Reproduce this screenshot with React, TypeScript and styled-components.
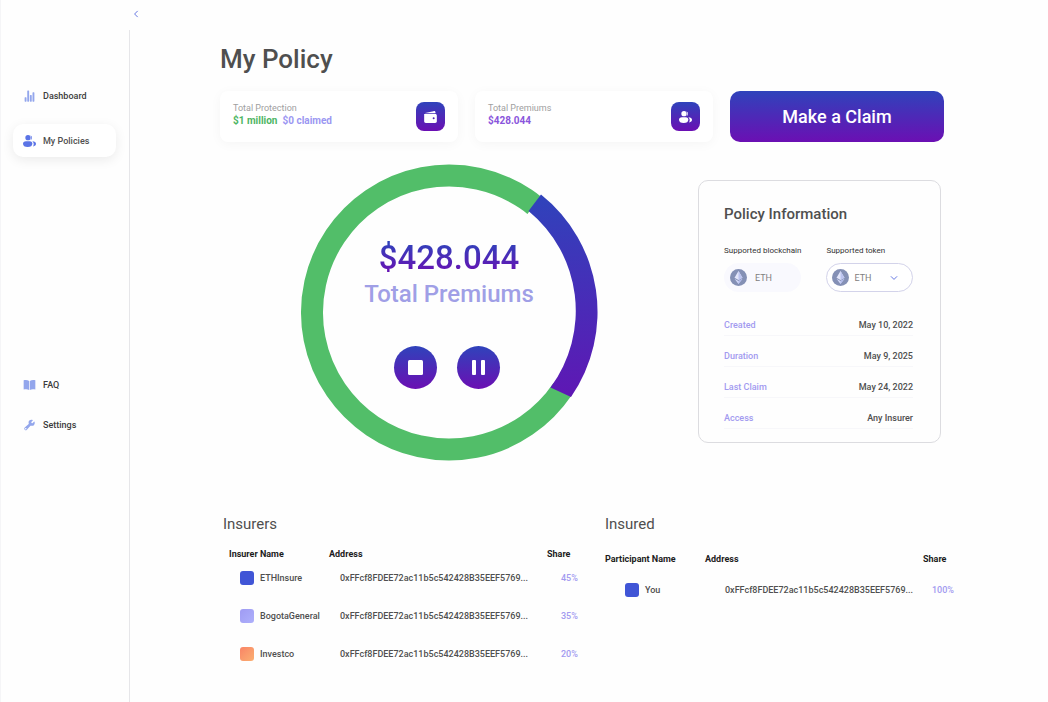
import React from "react";
import styled, { createGlobalStyle } from "styled-components";
import { IoBuild, IoChevronBack, IoChevronDown, IoStatsChart } from "react-icons/io5";

const GlobalStyle = createGlobalStyle`
  *, *::before, *::after { box-sizing: border-box; }
  body {
    margin: 0;
    background: #fefefe;
    color: #4f4f4f;
    font-family: Roboto, "Liberation Sans", sans-serif;
    font-weight: 500;
  }
  button, select { font: inherit; color: inherit; }
  h1, h2, p, dl, dd { margin: 0; }
`;

const gradient = "linear-gradient(180deg, #2f43bb 0%, #6b0fb3 100%)";

const Shell = styled.div`
  display: grid;
  grid-template-columns: 130px minmax(0, 1fr);
  grid-template-rows: 30px minmax(0, 1fr);
  min-height: 100vh;
  border-left: 1px solid #f5f5f7;
`;

const TopStrip = styled.div`
  grid-column: 2;
  display: flex;
`;

const CollapseButton = styled.button`
  display: grid;
  place-items: center;
  width: 10px;
  height: 28px;
  padding: 0;
  border: 0;
  background: none;
  color: #5c6fe0;
  font-size: 10px;
  cursor: pointer;
`;

const Sidebar = styled.nav`
  grid-row: 2;
  grid-column: 1;
  display: flex;
  flex-direction: column;
  gap: 211px;
  margin-right: 1px;
  padding: 49px 13px 0 12px;
  border-right: 1px solid #e6e6e9;
`;

const NavGroup = styled.div<{ $gap: number }>`
  display: flex;
  flex-direction: column;
  gap: ${(p) => p.$gap}px;
`;

const NavLink = styled.a<{ $active?: boolean }>`
  display: flex;
  align-items: center;
  gap: 7px;
  height: 33px;
  padding: 0 10px;
  border-radius: 10px;
  font-size: 9px;
  text-decoration: none;
  color: ${(p) => (p.$active ? "#4f4f4f" : "#3c3c3c")};
  background: ${(p) => (p.$active ? "#ffffff" : "transparent")};
  box-shadow: ${(p) => (p.$active ? "0 3px 12px rgba(0, 0, 0, 0.08)" : "none")};

  svg {
    width: 13px;
    height: 12px;
    color: ${(p) => (p.$active ? "#5b74e6" : "#93a6ec")};
  }
`;

const Main = styled.main`
  grid-row: 2;
  grid-column: 2;
  padding: 12px 94px 32px 89px;
`;

const PageTitle = styled.h1`
  font-size: 26px;
  line-height: 34px;
  font-weight: 500;
`;

const SummaryRow = styled.div`
  display: grid;
  grid-template-columns: 238fr 238fr 214fr;
  gap: 17px;
  margin-top: 15px;
  padding-right: 10px;
`;

const StatCard = styled.section`
  display: flex;
  align-items: center;
  justify-content: space-between;
  height: 51px;
  padding: 0 13px;
  border-radius: 8px;
  background: #ffffff;
  box-shadow: 0 2px 12px rgba(0, 0, 0, 0.04);
`;

const StatText = styled.div`
  padding-bottom: 4px;
`;

const StatLabel = styled.p`
  font-size: 9px;
  line-height: 12px;
  font-weight: 400;
  color: #a0a0a0;
`;

const StatValues = styled.p`
  display: flex;
  gap: 5px;
  font-size: 10px;
  line-height: 14px;
  font-weight: 700;
`;

const StatValue = styled.span<{ $color: string }>`
  color: ${(p) => p.$color};
`;

const StatBadge = styled.span`
  display: grid;
  place-items: center;
  width: 29px;
  height: 29px;
  border-radius: 8px;
  background: ${gradient};
  color: #ffffff;
`;

const ClaimButton = styled.button`
  height: 51px;
  border: 0;
  border-radius: 10px;
  background: ${gradient};
  color: #ffffff;
  font-size: 18px;
  cursor: pointer;
`;

const Overview = styled.div`
  display: grid;
  grid-template-columns: 458fr 243fr;
  gap: 20px;
  align-items: start;
  margin-top: 23px;
  padding-right: 13px;
`;

const Donut = styled.figure`
  display: grid;
  justify-items: center;
  margin: 0;

  > * {
    grid-area: 1 / 1;
  }
`;

const DonutRing = styled.svg`
  overflow: visible;
`;

const DonutBody = styled.figcaption`
  padding-top: 73px;
  text-align: center;
`;

const DonutAmount = styled.p`
  font-size: 33px;
  line-height: 40px;
  background: linear-gradient(180deg, #2f43bb 10%, #6b0fb3 90%);
  background-clip: text;
  color: transparent;
`;

const DonutLabel = styled.p`
  font-size: 24px;
  line-height: 32px;
  color: #a09fe6;
`;

const DonutControls = styled.div`
  display: flex;
  justify-content: center;
  gap: 20px;
  margin-top: 36px;
  padding-right: 4px;
`;

const RoundButton = styled.button`
  display: grid;
  place-items: center;
  width: 43px;
  height: 43px;
  padding: 0;
  border: 0;
  border-radius: 50%;
  background: ${gradient};
  cursor: pointer;
`;

const Panel = styled.section`
  margin-top: 15px;
  padding: 23px 27px 13px 25px;
  border: 1px solid #dcdce0;
  border-radius: 10px;
`;

const PanelTitle = styled.h2`
  font-size: 15px;
  line-height: 20px;
  font-weight: 500;
`;

const AssetRow = styled.div`
  display: grid;
  grid-template-columns: 77fr 87fr;
  gap: 25px;
  margin-top: 22px;
`;

const AssetLabel = styled.label`
  display: block;
  font-size: 8px;
  line-height: 10px;
  font-weight: 400;
  color: #333333;
  white-space: nowrap;
`;

const AssetPill = styled.div<{ $outlined?: boolean }>`
  display: flex;
  align-items: center;
  height: 29px;
  margin-top: 7px;
  padding: 0 5px;
  border: 1px solid ${(p) => (p.$outlined ? "#d3d3ea" : "transparent")};
  border-radius: 15px;
  background: ${(p) => (p.$outlined ? "#ffffff" : "#f9f9fe")};
  color: #808080;
  font-size: 9px;
  font-weight: 400;
`;

const AssetName = styled.output`
  margin-left: 8px;
`;

const AssetSelect = styled.select`
  flex: 1;
  min-width: 0;
  margin-left: 5px;
  padding: 0;
  border: 0;
  background: none;
  appearance: none;
  cursor: pointer;
`;

const SelectArrow = styled(IoChevronDown)`
  margin-right: 8px;
  color: #5c6fe0;
  font-size: 10px;
  pointer-events: none;
`;

const Facts = styled.dl`
  margin-top: 13px;
`;

const Fact = styled.div`
  display: flex;
  justify-content: space-between;
  height: 31px;
  padding-top: 13px;
  border-bottom: 1px solid #f7f7fa;
  font-size: 9px;
  line-height: 14px;
`;

const FactName = styled.dt`
  color: #a29af0;
`;

const Parties = styled.div`
  display: grid;
  grid-template-columns: 385fr 349fr;
  margin-top: 53px;
`;

const Party = styled.section<{ $left: number }>`
  padding-left: ${(p) => p.$left}px;
`;

const PartyTitle = styled.h2`
  font-size: 15px;
  line-height: 20px;
  font-weight: 400;
`;

const PartyTable = styled.table<{ $left: number; $top: number }>`
  width: calc(100% - ${(p) => p.$left}px);
  margin: ${(p) => p.$top}px 0 0 ${(p) => p.$left}px;
  border-collapse: collapse;
  table-layout: fixed;
  font-size: 9px;
  line-height: 10px;
  white-space: nowrap;
`;

const HeadCell = styled.th<{ $width?: number }>`
  width: ${(p) => (p.$width ? `${p.$width}px` : "auto")};
  padding: 0;
  text-align: left;
  font-weight: 700;
  color: #1c1c1c;
`;

const Cell = styled.td<{ $left: number; $height: number }>`
  height: ${(p) => p.$height}px;
  padding: 0 0 0 ${(p) => p.$left}px;
  color: #4f4f4f;
`;

const ShareCell = styled(Cell)`
  color: #a29af0;
`;

const Holder = styled.span`
  display: flex;
  align-items: center;
  gap: 6px;
`;

const Swatch = styled.span<{ $fill: string }>`
  width: 14px;
  height: 14px;
  border-radius: 3px;
  background: ${(p) => p.$fill};
`;

function PeopleIcon() {
  return (
    <svg width="13" height="12" viewBox="0 0 39 36" fill="currentColor" aria-hidden="true">
      <circle cx="15" cy="8" r="8" />
      <path d="M9 19h11c6 0 8 3 8 7 0 6-5 10-14 10S0 32 0 26c0-4 3-7 9-7z" />
      <path d="M22 0.5a8 8 0 0 1 0 15 12 12 0 0 0 0-15z" />
      <path d="M28 18.5c7 0 11 3 11 8 0 4-3 7-9 8 2-3 2.5-6 2-9-.5-3-2-5.500-4-7z" />
    </svg>
  );
}

function WalletIcon() {
  return (
    <svg width="13" height="12" viewBox="0 0 38 36" fill="currentColor" aria-hidden="true">
      <path d="M3 6 28 0.5c4-.8 6 1 6 5V7H3z" />
      <path
        fillRule="evenodd"
        d="M0 9h33c3.5 0 5 2 5 5v17c0 3-2 5-5 5H5c-3 0-5-2-5-5zM28.5 18.500a3 3 0 1 0 0 6 3 3 0 0 0 0-6z"
      />
    </svg>
  );
}

function BookIcon() {
  return (
    <svg viewBox="0 0 39 36" fill="currentColor" aria-hidden="true">
      <path d="M2 4c6-2 12-1 16.500 2v27C14 30 8 30 2 31.500z" />
      <path d="M37 4c-6-2-12-1-16.500 2v27C25 30 31 30 37 31.500z" />
    </svg>
  );
}

function EthIcon() {
  return (
    <svg width="17" height="17" viewBox="0 0 34 34" aria-hidden="true">
      <circle cx="17" cy="17" r="17" fill="#8490b5" />
      <path d="M17 4 9 17.500l8 4.500 8-4.500z" fill="#e3e6fb" />
      <path d="M17 4v18l8-4.500z" fill="#bcc4f0" />
      <path d="M9 19.500 17 30l8-10.500-8 4.500z" fill="#d3d8f8" />
      <path d="M17 24v6l8-10.500z" fill="#b0b9ea" />
    </svg>
  );
}

function DonutChart() {
  return (
    <DonutRing width="296" height="296" viewBox="0 0 296 296" aria-hidden="true">
      <defs>
        <linearGradient id="share" x1="0" y1="0" x2="0" y2="1">
          <stop offset="0" stopColor="#2f43bb" />
          <stop offset="1" stopColor="#5f17b4" />
        </linearGradient>
      </defs>
      <circle
        cx="148"
        cy="147.5"
        r="137"
        fill="none"
        stroke="#52be69"
        strokeWidth="22"
        pathLength="360"
        strokeDasharray="274.5 85.5"
        transform="rotate(34 148 147.5)"
      />
      <path
        d="M240 29.500A150 150 0 0 1 270 232L249.500 222.500A129 129 0 0 0 227.500 46z"
        fill="url(#share)"
      />
    </DonutRing>
  );
}

type Row = { name: string; fill: string; share: string };

const ADDRESS = "0xFFcf8FDEE72ac11b5c542428B35EEF5769...";

const insurers: Row[] = [
  { name: "ETHInsure", fill: "#4055d6", share: "45%" },
  { name: "BogotaGeneral", fill: "linear-gradient(135deg, #9f9bf3, #aeb0fb)", share: "35%" },
  { name: "Investco", fill: "linear-gradient(135deg, #f98466, #fbb072)", share: "20%" },
];

const insured: Row[] = [{ name: "You", fill: "#4055d6", share: "100%" }];

const facts = [
  ["Created", "May 10, 2022"],
  ["Duration", "May 9, 2025"],
  ["Last Claim", "May 24, 2022"],
  ["Access", "Any Insurer"],
];

type HoldersProps = {
  nameHeading: string;
  rows: Row[];
  left: number;
  top: number;
  rowHeight: number;
  indent: [number, number, number];
};

function Holders({ nameHeading, rows, left, top, rowHeight, indent }: HoldersProps) {
  return (
    <PartyTable $left={left} $top={top}>
      <thead>
        <tr>
          <HeadCell $width={100}>{nameHeading}</HeadCell>
          <HeadCell $width={218}>Address</HeadCell>
          <HeadCell>Share</HeadCell>
        </tr>
      </thead>
      <tbody>
        {rows.map((row) => (
          <tr key={row.name}>
            <Cell $left={indent[0]} $height={rowHeight}>
              <Holder>
                <Swatch $fill={row.fill} />
                {row.name}
              </Holder>
            </Cell>
            <Cell $left={indent[1]} $height={rowHeight}>{ADDRESS}</Cell>
            <ShareCell $left={indent[2]} $height={rowHeight}>{row.share}</ShareCell>
          </tr>
        ))}
      </tbody>
    </PartyTable>
  );
}

export default function App() {
  return (
    <>
      <GlobalStyle />
      <Shell>
        <TopStrip>
          <CollapseButton type="button" aria-label="Collapse sidebar">
            <IoChevronBack />
          </CollapseButton>
        </TopStrip>

        <Sidebar aria-label="Main">
          <NavGroup $gap={12}>
            <NavLink href="#dashboard"><IoStatsChart />Dashboard</NavLink>
            <NavLink href="#policies" $active aria-current="page"><PeopleIcon />My Policies</NavLink>
          </NavGroup>
          <NavGroup $gap={7}>
            <NavLink href="#faq"><BookIcon />FAQ</NavLink>
            <NavLink href="#settings"><IoBuild />Settings</NavLink>
          </NavGroup>
        </Sidebar>

        <Main>
          <PageTitle>My Policy</PageTitle>

          <SummaryRow>
            <StatCard>
              <StatText>
                <StatLabel>Total Protection</StatLabel>
                <StatValues>
                  <StatValue $color="#4db563">$1 million</StatValue>
                  <StatValue $color="#9b97f2">$0 claimed</StatValue>
                </StatValues>
              </StatText>
              <StatBadge><WalletIcon /></StatBadge>
            </StatCard>
            <StatCard>
              <StatText>
                <StatLabel>Total Premiums</StatLabel>
                <StatValues>
                  <StatValue $color="#8a56dc">$428.044</StatValue>
                </StatValues>
              </StatText>
              <StatBadge><PeopleIcon /></StatBadge>
            </StatCard>
            <ClaimButton type="button">Make a Claim</ClaimButton>
          </SummaryRow>

          <Overview>
            <Donut>
              <DonutChart />
              <DonutBody>
                <DonutAmount>$428.044</DonutAmount>
                <DonutLabel>Total Premiums</DonutLabel>
                <DonutControls>
                  <RoundButton type="button" aria-label="Stop">
                    <svg width="15" height="15" viewBox="0 0 15 15">
                      <rect width="15" height="15" rx="1.5" fill="#fff" />
                    </svg>
                  </RoundButton>
                  <RoundButton type="button" aria-label="Pause">
                    <svg width="13" height="15" viewBox="0 0 13 15">
                      <rect width="4" height="15" rx="1" fill="#fff" />
                      <rect x="9" width="4" height="15" rx="1" fill="#fff" />
                    </svg>
                  </RoundButton>
                </DonutControls>
              </DonutBody>
            </Donut>

            <Panel>
              <PanelTitle>Policy Information</PanelTitle>
              <AssetRow>
                <div>
                  <AssetLabel htmlFor="blockchain">Supported blockchain</AssetLabel>
                  <AssetPill>
                    <EthIcon />
                    <AssetName id="blockchain">ETH</AssetName>
                  </AssetPill>
                </div>
                <div>
                  <AssetLabel htmlFor="token">Supported token</AssetLabel>
                  <AssetPill $outlined>
                    <EthIcon />
                    <AssetSelect id="token" defaultValue="ETH">
                      <option>ETH</option>
                    </AssetSelect>
                    <SelectArrow />
                  </AssetPill>
                </div>
              </AssetRow>
              <Facts>
                {facts.map(([name, value]) => (
                  <Fact key={name}>
                    <FactName>{name}</FactName>
                    <dd>{value}</dd>
                  </Fact>
                ))}
              </Facts>
            </Panel>
          </Overview>

          <Parties>
            <Party $left={3}>
              <PartyTitle>Insurers</PartyTitle>
              <Holders
                nameHeading="Insurer Name"
                rows={insurers}
                left={6}
                top={15}
                rowHeight={38}
                indent={[11, 11, 14]}
              />
            </Party>
            <Party $left={0}>
              <PartyTitle>Insured</PartyTitle>
              <Holders
                nameHeading="Participant Name"
                rows={insured}
                left={0}
                top={20}
                rowHeight={52}
                indent={[20, 20, 9]}
              />
            </Party>
          </Parties>
        </Main>
      </Shell>
    </>
  );
}
